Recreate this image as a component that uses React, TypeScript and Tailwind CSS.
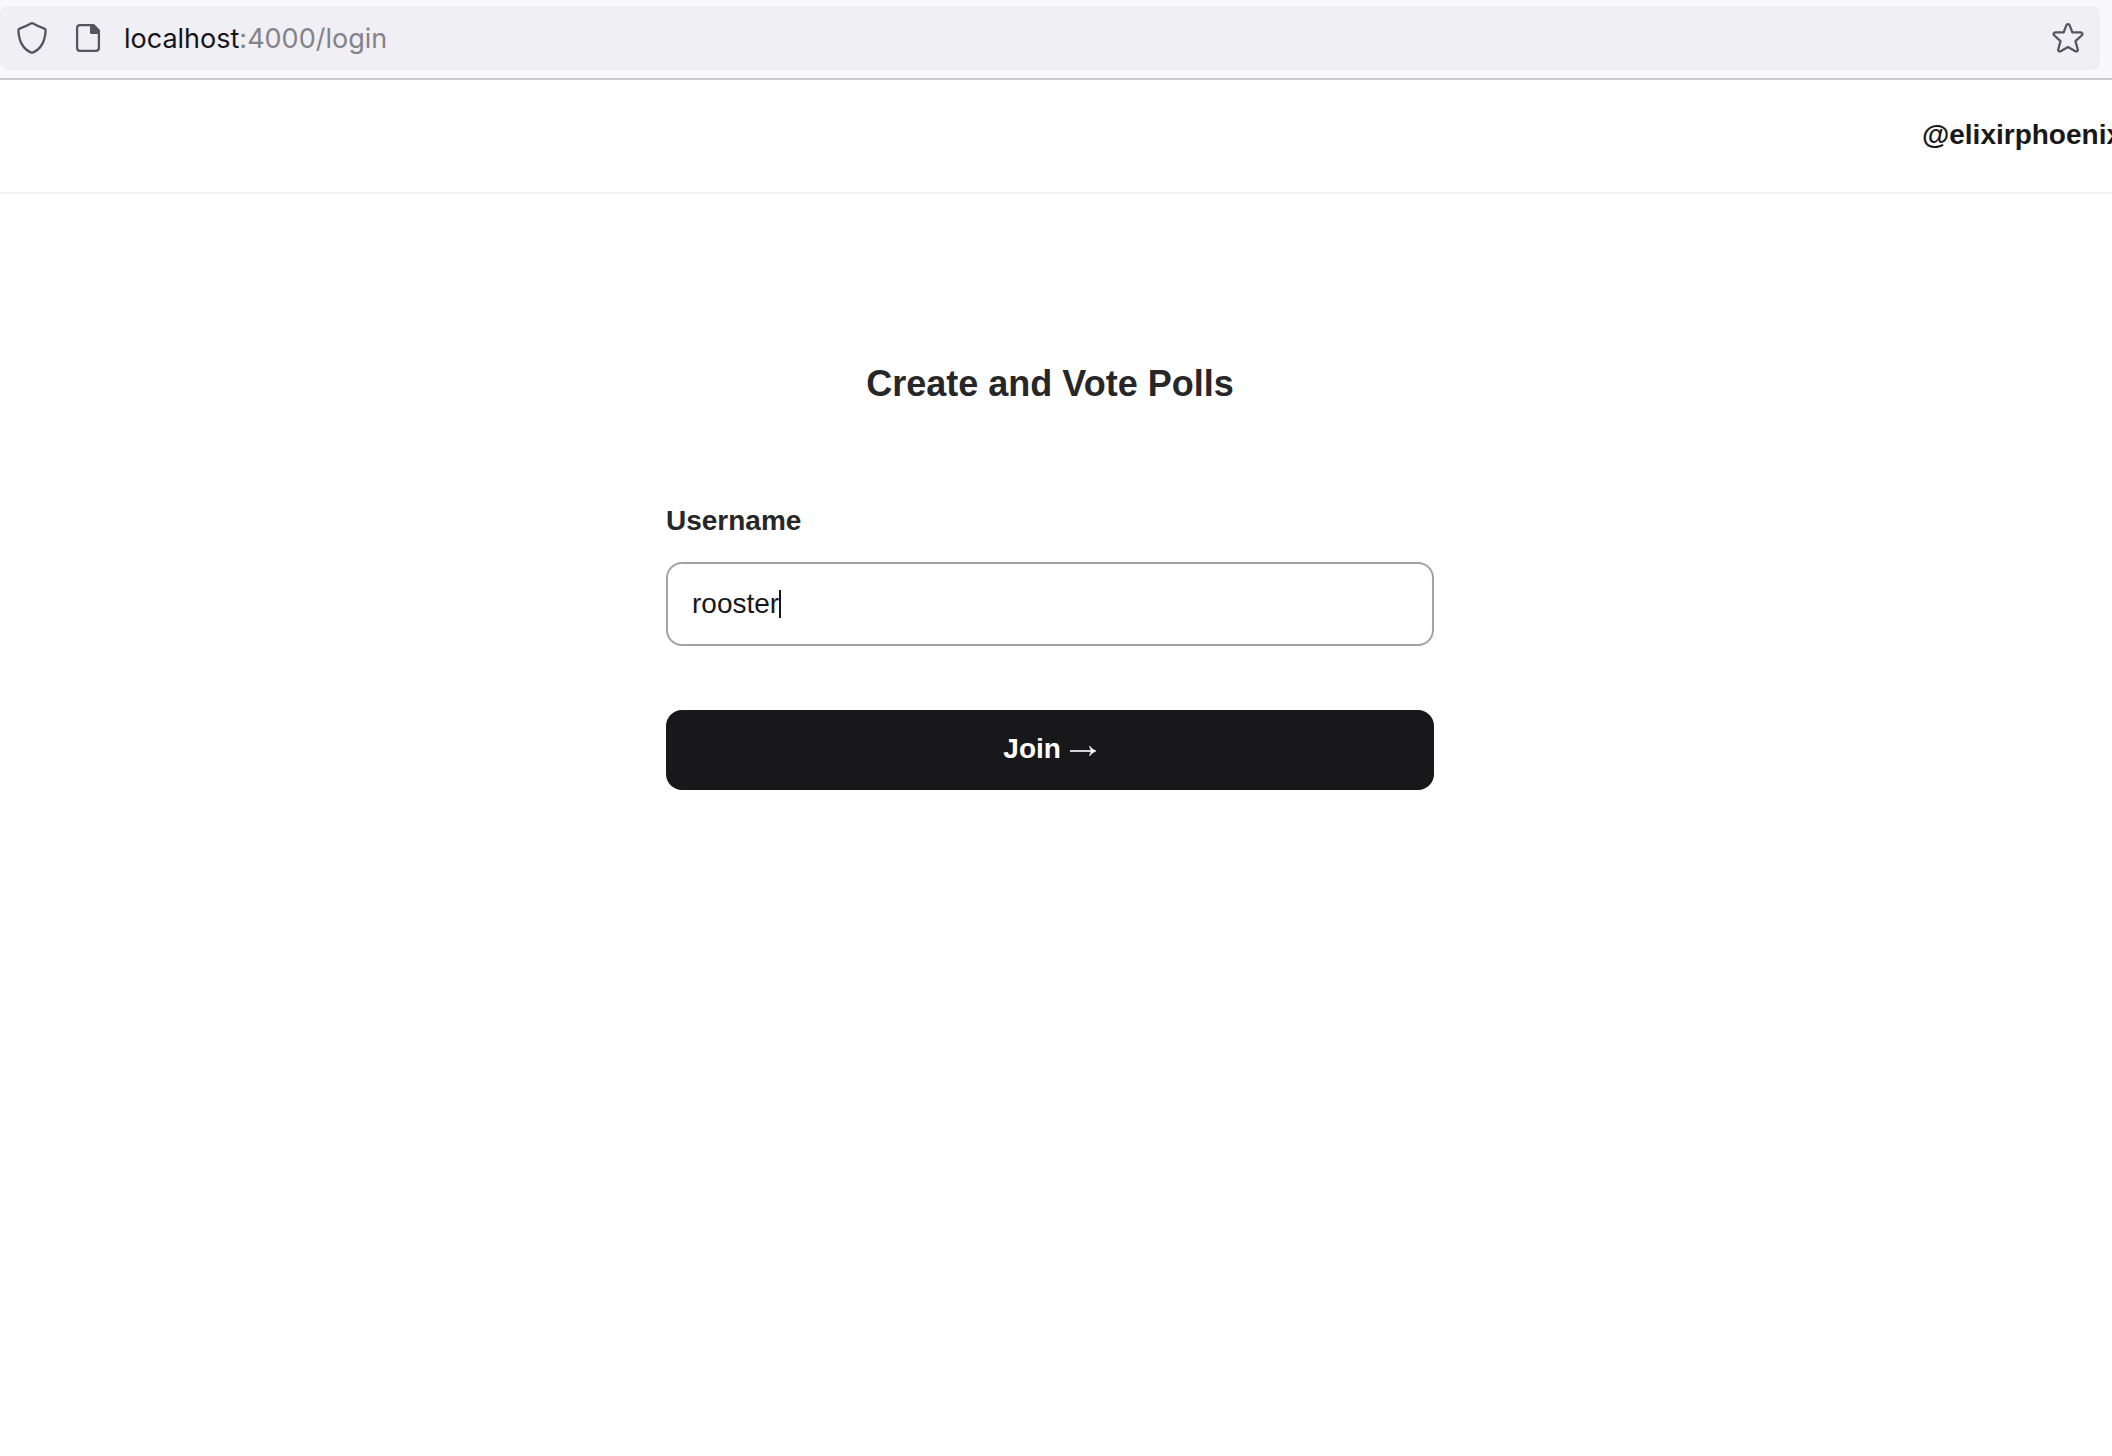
import { useState } from "react";

function ShieldIcon() {
  return (
    <svg className="h-8 w-8" viewBox="0 0 32 32" fill="none" stroke="#56555c" strokeWidth="2.3" strokeLinejoin="round" aria-hidden="true">
      <path d="M14.9 1.5Q16 .9 17.1 1.5Q22.5 4.6 28.4 6.6Q29.7 7 29.6 8.400C29.2 17.600 26 26.400 17.200 30.400Q16 31 14.800 30.400C6 26.400 2.800 17.600 2.400 8.400Q2.300 7 3.600 6.600Q9.500 4.600 14.900 1.500Z" />
    </svg>
  );
}

function PageIcon() {
  return (
    <svg className="h-8 w-8" viewBox="0 0 32 32" fill="none" stroke="#56555c" strokeWidth="2.3" strokeLinejoin="round" aria-hidden="true">
      <path d="M8 3.100H21.500L26.900 8.500V26A3 3 0 0 1 23.900 28.900H8A3 3 0 0 1 5.100 26V6A3 3 0 0 1 8 3.100Z" />
      <path d="M18 3H22L27 8V12H19.500A1.500 1.500 0 0 1 18 10.500Z" fill="#56555c" stroke="none" />
    </svg>
  );
}

function StarIcon() {
  return (
    <svg className="h-8 w-8" viewBox="0 0 32 32" fill="none" stroke="#56555c" strokeWidth="2.3" strokeLinejoin="round" aria-hidden="true">
      <path d="M14.300 3.400C14.900 1.800 17.100 1.800 17.700 3.400L20.300 10.400H28.400C30.300 10.400 31 12.300 29.600 13.500L23.500 19.200L25.700 27.200C26.200 29 24.400 30 22.900 29L16 24.900L9.100 29C7.600 30 5.800 29 6.300 27.200L8.500 19.200L2.400 13.500C1 12.300 1.700 10.400 3.600 10.400H11.700Z" />
    </svg>
  );
}

function ArrowIcon() {
  return (
    <svg className="inline-block h-7 w-7 align-middle" viewBox="0 0 28 28" aria-hidden="true">
      <path d="M1 14H24" stroke="#d4d4d6" strokeWidth="2" />
      <path d="M20.500 9Q23 12.600 27 14Q23 15.400 20.500 19Q21.200 16.200 22.500 14Q21.200 11.800 20.500 9Z" fill="white" stroke="white" strokeWidth=".6" />
    </svg>
  );
}

function AddressBar() {
  return (
    <div className="border-b-2 border-[#cacacd] bg-[#f9f9fb] pt-1.5 pr-3 pb-2">
      <div className="flex h-16 items-center rounded-lg bg-[#f0eff4] px-4">
        <button type="button" aria-label="Tracking protection">
          <ShieldIcon />
        </button>
        <button type="button" aria-label="Site information" className="ml-6">
          <PageIcon />
        </button>
        <div className="ml-5 flex-1 pt-0.5 font-['Inter',sans-serif] text-[27px] leading-9 text-[#15141a]">
          localhost<span className="text-[#84838a]">:4000/login</span>
        </div>
        <button type="button" aria-label="Bookmark this page">
          <StarIcon />
        </button>
      </div>
    </div>
  );
}

export default function App() {
  const [username, setUsername] = useState("rooster");

  return (
    <div className="min-h-screen overflow-hidden bg-white font-['Liberation_Sans',Arial,sans-serif]">
      <AddressBar />
      <header className="flex justify-end border-b-2 border-[#f4f4f5] pt-[35px] pb-[37px]">
        <a href="#" className="-mr-2.5 text-[28px] leading-10 font-bold whitespace-nowrap text-[#18181b]">
          @elixirphoenix
        </a>
      </header>
      <main className="pt-40 pr-3">
        <form className="mx-auto max-w-3xl" onSubmit={(e) => e.preventDefault()}>
          <h1 className="text-center text-[36px] leading-[60px] font-bold text-[#27272a]">Create and Vote Polls</h1>
          <label htmlFor="username" className="mt-[84px] block text-[28px] leading-[46px] font-bold text-[#27272a]">
            Username
          </label>
          <div className="relative mt-[18px]">
            <input
              id="username"
              type="text"
              value={username}
              onChange={(e) => setUsername(e.target.value)}
              className="block w-full rounded-2xl border-2 border-[#a1a1aa] px-6 py-5 text-[28px] leading-10 text-[#18181b] outline-none"
            />
            <span className="absolute top-7 left-[113px] h-7 w-0.5 bg-[#18181b]" />
          </div>
          <button
            type="submit"
            className="mt-16 block h-20 w-full rounded-2xl bg-[#18181b] pb-0.5 text-[28px] leading-10 font-bold text-white"
          >
            Join <ArrowIcon />
          </button>
        </form>
      </main>
    </div>
  );
}
